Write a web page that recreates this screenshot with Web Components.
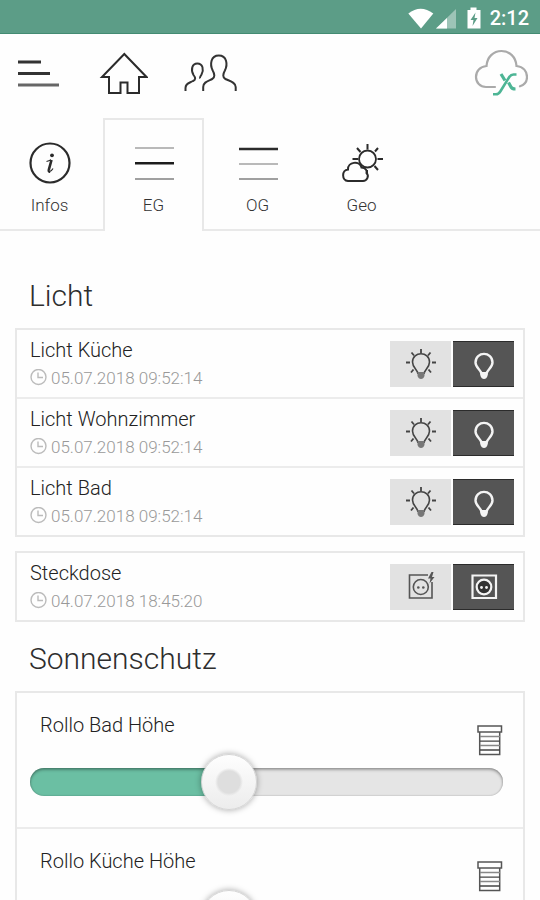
<!DOCTYPE html>
<html lang="de">
<head>
<meta charset="utf-8">
<meta name="viewport" content="width=device-width, initial-scale=1">
<title>EG</title>
<style>
  html, body { margin: 0; height: 100%; }
  body { background: #fefefe; color: #444; font-family: Roboto, "Liberation Sans", sans-serif; }
</style>
</head>
<body>
<smart-home-app></smart-home-app>

<script>
const ICONS = {
  menu: ['18 50 44 48', '<g stroke-width="3" fill="none"><path stroke="#333" d="M18 62h23M18 73.500h32"/><path stroke="#666" d="M18 85h41"/></g>'],
  home: ['98 50 50 48', '<path fill="none" stroke="#2b2b2b" stroke-width="2" d="M124.300 54L102 77h7v16h11.500V82.500h7V93H139V77h7.500z"/>'],
  people: ['184 50 54 48', '<g fill="none" stroke="#333" stroke-width="2"><path d="M203.200 91v-4c0-5 5-6 9-8 3-1.500 2.500-5 .5-8.500-3-6-2-15 6.100-15s9.100 9 6.100 15c-2 3.500-2.500 7 .5 8.500 4 2 10.300 3 10.300 8v4"/><path d="M185.500 91v-3c0-5 4-5 7.500-7 3-1.500 2.500-3.500.5-6-3-5-1.500-11.500 3.800-11.500 5.700 0 6.700 6.500 4.200 11-1.500 2.500-2 3-1.500 4"/></g>'],
  cloud: ['474 46 54 54', '<path fill="none" stroke="#aaa" stroke-width="2.200" stroke-linecap="round" d="M495 87h-9c-6 0-10-4.500-10-10 0-6 4-10.500 10.500-11 .5-9 7-15 15-15s14.500 6 15 15c7 .5 10.500 5.500 10.500 11 0 4.500-3 8-7 9.300"/><g fill="none" stroke="#4db595"><path stroke-width="2.600" d="M516.500 74.500h-3c-2 0-3 .8-4.200 2.500l-9 14.500c-1.300 2-2.300 2.800-4.300 2.800h-3"/><path stroke-width="3.200" d="M501 74l4 6.500M508.500 82.500l2.500 4.500q1 2 4.500 2"/></g>'],
  info: ['132 140 42 46', '<circle cx="153" cy="163" r="19.500" fill="none" stroke="#2b2b2b" stroke-width="2.200"/><circle cx="155" cy="155.300" r="1.900" fill="#2b2b2b"/><path fill="none" stroke="#2b2b2b" stroke-width="2.600" d="M154.500 160l-2.600 9.500q-.5 2.500 1 2"/><path fill="none" stroke="#2b2b2b" stroke-width="1.200" d="M149.500 161.500q2.500-.5 4.500-1.700M152 171.500q2 .5 4-3"/>'],
  eg: ['132 140 42 46', '<path stroke="#b9b9b9" stroke-width="2" d="M134 148h39"/><path stroke="#1c1c1c" stroke-width="2.500" d="M134 163.300h39"/><path stroke="#a0a0a0" stroke-width="2" d="M134 179h39"/>'],
  og: ['132 140 42 46', '<path stroke="#2b2b2b" stroke-width="2.500" d="M134 149h39"/><path stroke="#b9b9b9" stroke-width="2" d="M134 164h39"/><path stroke="#a0a0a0" stroke-width="2" d="M134 179h39"/>'],
  geo: ['340 140 42 46', '<g fill="none" stroke="#2b2b2b"><circle cx="366.500" cy="159" r="8.500" stroke-width="1.800"/><path stroke-width="2" d="M366.500 144v5.500M374 151.500l3-3.500M376.500 159h5.500M373.500 166l3.500 4M359.500 152l-3.500-4M357 159h-5.500M366 170v5"/><path stroke-width="2" fill="#fefefe" d="M347 181c-6.500-.5-6.500-11 0-11.500-.5-7.500 11.500-9.500 13.500-2 5 .500 5.500 3.500 5 5.500 3 3 .5 8-3.500 8z"/></g>'],
  clock: ['30 369 18 18', '<g fill="none" stroke="#bbb" stroke-width="1.400"><circle cx="38.500" cy="377" r="7.500"/><path d="M38 372.500v5h5"/></g>'],
  bulbOn: ['404 345 34 36', '<g fill="none" stroke="#444"><path stroke-width="1.600" d="M418 373c0-4-5.500-6-5.500-12 0-11 17-11 17 0 0 6-5.500 8-5.500 12"/><path stroke-width="1.800" d="M421 348v4M411.500 351.500l2.500 3M430.500 351.500l-2.500 3M406 361.500h4M432 361.500h4M411 371.500l2.500-3M431 371.500l-2.500-3"/></g><path fill="#777" d="M417.500 371h7v4q-1 3-3.500 3t-3.500-3z"/>'],
  bulbOff: ['467 345 34 36', '<path fill="none" stroke="#f4f4f4" stroke-width="2.400" d="M481.500 373c0-4-6-6-6-11.500 0-11.500 17-11.500 17 0 0 5.500-6 7.500-6 11.500z"/><path fill="#f4f4f4" d="M480.500 371h7v4q-1 3-3.500 3t-3.500-3z"/>'],
  socketOn: ['404 567 34 38', '<g fill="none" stroke="#555" stroke-width="1.600"><path d="M428 574h-18.500v23H432v-16"/><circle cx="420.800" cy="586" r="7.500"/></g><path fill="#555" d="M431.500 571l-3.500 6.500h2.500l-1 5 5-6.500H432l1.500-5z"/><circle cx="418.300" cy="586.500" r="1.300" fill="#555"/><circle cx="423.300" cy="586.500" r="1.300" fill="#555"/>'],
  socketOff: ['467 567 34 38', '<g fill="none" stroke="#f4f4f4" stroke-width="2.200"><path d="M472.500 574.500h23.500V597h-23.500z"/><circle cx="484" cy="586" r="7.300" fill="#333"/></g><circle cx="481.500" cy="586.500" r="1.400" fill="#f4f4f4"/><circle cx="486.500" cy="586.500" r="1.400" fill="#f4f4f4"/>'],
  shutter: ['475 724 28 34', '<g fill="none" stroke="#555" stroke-width="1.500"><path d="M478 726h23.500v6H478zM479.700 732v22.500h20V732"/></g><g fill="none" stroke-width="1.300"><path stroke="#888" d="M480 736.500h20M480 745.500h20"/><path stroke="#444" d="M480 741.200h20M480 750h20"/></g>'],
  wifi: ['408 6 26 22', '<path fill="#fff" d="M408.300 12.500q12.300-9.500 25 0L421 27.500z"/>'],
  signal: ['435 6 22 22', '<path fill="#fff" fill-opacity=".4" d="M456 8v19.500h-20z"/><path fill="#fff" d="M447 17v10.500h-11z"/>'],
  battery: ['466 6 16 22', '<path fill="#fff" d="M470.500 6.500h6V9h4v18.500h-13V9h3z"/><path fill="#5c9d87" d="M475.500 11.500l-5 7.500h3l-1 6 5-8h-3z"/>'],
};

function define(name, css, html, extra) {
  customElements.define(name, class extends HTMLElement {
    constructor() {
      super();
      this.attachShadow({ mode: 'open' });
    }
    connectedCallback() {
      const markup = typeof html === 'function' ? html(this) : html;
      this.shadowRoot.innerHTML = `<style>*{box-sizing:border-box}${css}</style>${markup}`;
      if (extra) extra(this);
    }
  });
}

define('ui-icon',
  ':host{display:inline-flex;flex:none}svg{display:block}',
  el => {
    const [box, body] = ICONS[el.getAttribute('name')];
    const [, , w, h] = box.split(' ');
    return `<svg width="${w}" height="${h}" viewBox="${box}" aria-hidden="true">${body}</svg>`;
  });

define('status-bar',
  `:host{display:flex;align-items:center;justify-content:flex-end;height:34px;padding:2px 11px 0 0;box-sizing:border-box;
     background:#5c9d87;border-bottom:1px solid #438b72;color:#fff;font-size:20px;font-weight:500}
   .signal{margin:0 9px 0 1px} time{margin-left:8px}`,
  `<ui-icon name="wifi"></ui-icon><ui-icon class="signal" name="signal"></ui-icon><ui-icon name="battery"></ui-icon><time>2:12</time>`);

define('app-header',
  `:host{display:flex;gap:36px;align-items:flex-start;padding:16px 12px 20px 18px}
   button{display:flex;border:0;background:none;padding:0;cursor:pointer}
   .cloud{margin:-4px 0 -2px auto}`,
  `<button aria-label="Menü"><ui-icon name="menu"></ui-icon></button>
   <button aria-label="Startseite"><ui-icon name="home"></ui-icon></button>
   <button aria-label="Benutzer"><ui-icon name="people"></ui-icon></button>
   <button class="cloud" aria-label="Cloud"><ui-icon name="cloud"></ui-icon></button>`);

define('nav-tab',
  `:host{display:block;width:101px}
   button{display:flex;flex-direction:column;align-items:center;width:100%;height:100%;padding:20px 0 16px;border:2px solid transparent;border-bottom:0;
     background:none;color:#333;font:300 17px/20px Roboto,"Liberation Sans",sans-serif;cursor:pointer}
   :host([selected]) button{border-color:#e8e8e8;background:#fefefe}
   span{margin-top:9px}`,
  el => `<button role="tab" aria-selected="${el.hasAttribute('selected')}"><ui-icon name="${el.getAttribute('icon')}"></ui-icon><span><slot></slot></span></button>`);

define('tab-strip',
  `:host{display:block;overflow:hidden}
   div{display:flex;gap:3px;margin-left:-1px;box-shadow:inset 0 -2px #e9e9e9}`,
  `<div role="tablist"><slot></slot></div>`);

define('room-section',
  `:host{display:block;padding:0 15px} h2{margin:0;padding:0 14px;font-size:30px;line-height:34px;font-weight:300;color:#2e2e2e}
   .cards{display:flex;flex-direction:column;gap:14px;padding-top:15px}`,
  el => `<h2>${el.getAttribute('heading')}</h2><div class="cards"><slot></slot></div>`);

define('item-card',
  `:host{display:flex;flex-direction:column;gap:2px;border:2px solid #e8e8e8;background:#ececec}`,
  `<slot></slot>`);

define('switch-item',
  `:host{display:flex;align-items:center;justify-content:space-between;height:67px;padding:0 9px 0 13px;background:#fefefe;box-sizing:border-box}
   .name{font-size:20px;line-height:24px;font-weight:300;color:#222}
   .time{display:flex;align-items:center;gap:3px;margin-top:4px;font-size:17px;line-height:24px;font-weight:300;color:#999}
   .actions{display:flex;gap:2px}
   button{display:flex;align-items:center;justify-content:center;width:61px;height:46px;padding:0;border:0;background:#e2e2e2;cursor:pointer}
   button[aria-pressed=true]{background:#555;border:solid #2b2b2b;border-width:1px 0}`,
  el => `<div><div class="name"><slot></slot></div>
     <div class="time"><ui-icon name="clock"></ui-icon><time>${el.getAttribute('time')}</time></div></div>
     <div class="actions"><button aria-label="Ein" aria-pressed="false"><ui-icon name="${el.getAttribute('icon')}On"></ui-icon></button>
     <button aria-label="Aus" aria-pressed="true"><ui-icon name="${el.getAttribute('icon')}Off"></ui-icon></button></div>`,
  el => {
    const buttons = [...el.shadowRoot.querySelectorAll('button')];
    buttons.forEach(b => b.addEventListener('click', () => buttons.forEach(o => o.setAttribute('aria-pressed', o === b))));
  });

define('slider-item',
  `:host{display:block;height:134px;padding:18px 20px 0 13px;background:#fefefe;box-sizing:border-box}
   .top{display:flex;justify-content:space-between;padding-left:10px}
   label{font-size:20px;line-height:28px;font-weight:300;color:#222}
   ui-icon{margin-top:13px;height:30px}
   input{-webkit-appearance:none;appearance:none;display:block;width:100%;height:56px;margin:0;background:none;cursor:pointer}
   input::-webkit-slider-runnable-track{height:28px;border-radius:14px;
     background:linear-gradient(90deg,#6bbfa3 var(--fill),#e5e5e5 var(--fill));
     box-shadow:inset 0 2px 3px rgba(0,0,0,.3),inset 0 0 2px rgba(0,0,0,.25)}
   input::-webkit-slider-thumb{-webkit-appearance:none;width:56px;height:56px;margin-top:-14px;border:1px solid #d4d4d4;border-radius:50%;
     background:radial-gradient(circle,#dedede 11px,transparent 14px),linear-gradient(#fefefe,#ececec);
     box-shadow:0 0 6px rgba(0,0,0,.35)}`,
  el => `<div class="top"><label for="range">${el.getAttribute('label')}</label><ui-icon name="shutter"></ui-icon></div>
     <input id="range" type="range" min="0" max="100" value="${el.getAttribute('value')}">`,
  el => {
    const input = el.shadowRoot.querySelector('input');
    const paint = () => input.style.setProperty('--fill', `${input.value}%`);
    input.addEventListener('input', paint);
    paint();
  });

define('smart-home-app',
  `:host{display:flex;flex-direction:column;height:100%;overflow:hidden}
   status-bar,app-header,tab-strip{flex:none}
   main{display:flex;flex-direction:column;gap:20px;flex:1;min-height:0;overflow:hidden;padding-top:48px}
   room-section{flex:none}`,
  `<status-bar></status-bar>
   <app-header></app-header>
   <tab-strip>
     <nav-tab icon="info">Infos</nav-tab>
     <nav-tab icon="eg" selected>EG</nav-tab>
     <nav-tab icon="og">OG</nav-tab>
     <nav-tab icon="geo">Geo</nav-tab>
   </tab-strip>
   <main>
     <room-section heading="Licht">
       <item-card>
         <switch-item icon="bulb" time="05.07.2018 09:52:14">Licht Küche</switch-item>
         <switch-item icon="bulb" time="05.07.2018 09:52:14">Licht Wohnzimmer</switch-item>
         <switch-item icon="bulb" time="05.07.2018 09:52:14">Licht Bad</switch-item>
       </item-card>
       <item-card>
         <switch-item icon="socket" time="04.07.2018 18:45:20">Steckdose</switch-item>
       </item-card>
     </room-section>
     <room-section heading="Sonnenschutz">
       <item-card>
         <slider-item label="Rollo Bad Höhe" value="41"></slider-item>
         <slider-item label="Rollo Küche Höhe" value="41"></slider-item>
       </item-card>
     </room-section>
   </main>`);
</script>
</body>
</html>
